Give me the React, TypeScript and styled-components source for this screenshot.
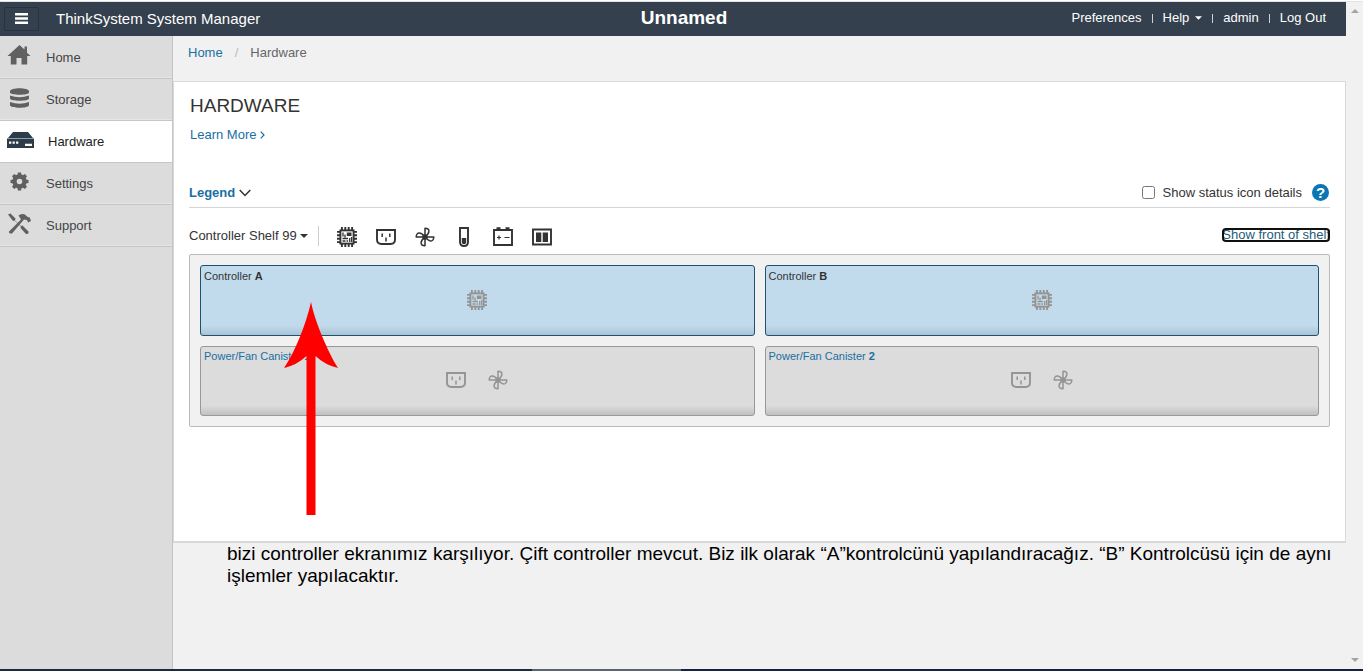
import React from "react";
import styled, { createGlobalStyle, css } from "styled-components";

const GlobalStyle = createGlobalStyle`
  * { box-sizing: border-box; }
  body {
    margin: 0;
    background: #f1f1f1;
    color: #333;
    font-family: "Liberation Sans", Arial, sans-serif;
    font-size: 13px;
    line-height: 18px;
  }
  a { color: #1a6fa3; text-decoration: none; }
  button, select, input { font: inherit; }
`;

const Window = styled.div`
  display: flex;
  flex-direction: column;
  min-height: 100vh;
  border-top: 1px solid #fff;
`;

const Viewport = styled.div`
  display: flex;
  flex: 1;
  border-top: 1px solid #dfe3e6;
`;

const Page = styled.div`
  display: flex;
  flex-direction: column;
  flex: 1;
  min-width: 0;
`;

const ScrollTrack = styled.div`
  display: flex;
  flex-direction: column;
  justify-content: space-between;
  align-items: center;
  width: 17px;
  padding: 7px 0 7px;
  background: #f1f1f1;
`;

const BottomEdge = styled.div`
  height: 2px;
  background: linear-gradient(90deg, #1b2b3c 39%, #5c6470 39%, #5c6470 50%, #16213f 50%);
`;

const Header = styled.header`
  display: grid;
  grid-template-columns: 1fr auto 1fr;
  align-items: center;
  height: 34px;
  padding-left: 4px;
  background: #34404d;
  color: #fff;
`;

const Brand = styled.div`
  display: flex;
  align-items: center;
  gap: 17px;
  font-size: 15px;
`;

const MenuButton = styled.button`
  display: flex;
  align-items: center;
  justify-content: center;
  width: 35px;
  height: 24px;
  padding: 0 0 2px;
  border: 1px solid #28323d;
  border-radius: 2px;
  background: transparent;
  color: #fff;
`;

const SystemName = styled.div`
  padding: 0 0 2px 18px;
  font-size: 19px;
  font-weight: bold;
`;

const UserNav = styled.nav`
  display: flex;
  align-items: center;
  justify-content: flex-end;
  gap: 10px;
  padding: 0 20px 2px 0;
  a { color: #fff; display: flex; align-items: center; gap: 6px; }
`;

const Bar = styled.span`
  width: 1px;
  height: 9px;
  background: #cdd2d6;
`;

const Body = styled.div`
  display: flex;
  flex: 1;
`;

const Sidebar = styled.nav`
  flex: 0 0 173px;
  padding-top: 1px;
  border-right: 1px solid #c4c4c4;
  background: #dcdcdc;
`;

const NavItem = styled.a<{ $active?: boolean }>`
  display: flex;
  align-items: center;
  gap: 14px;
  height: 42px;
  padding: 0 0 0 7px;
  border-bottom: 1px solid #c6c6c6;
  color: #444;
  box-shadow: inset 0 -1px #e6e6e6;
  ${(p) =>
    p.$active &&
    css`
      background: #fff;
      color: #222;
      box-shadow: none;
    `}
`;

const NavIcon = styled.svg`
  flex: none;
  margin-bottom: 4px;
`;

const Main = styled.main`
  flex: 1;
  min-width: 0;
`;

const Crumbs = styled.nav`
  display: flex;
  gap: 12px;
  height: 45px;
  padding: 8px 15px;
  color: #666;
`;

const Slash = styled.span`
  color: #bbb;
`;

const Panel = styled.section`
  position: relative;
  min-height: 462px;
  padding: 12px 15px 0;
  border: 1px solid #d9d9d9;
  border-bottom-width: 2px;
  background: #fff;
`;

const Intro = styled.div`
  padding-left: 1px;
`;

const Title = styled.h1`
  margin: 0;
  font-size: 19px;
  font-weight: normal;
  line-height: 24px;
`;

const LearnMore = styled.a`
  display: flex;
  align-items: center;
  gap: 4px;
  margin-top: 8px;
`;

const SplitRow = styled.div`
  display: flex;
  align-items: center;
  justify-content: space-between;
`;

const LegendRow = styled(SplitRow)`
  height: 30px;
  margin-top: 34px;
  border-bottom: 1px solid #d3d6d8;
`;

const LegendToggle = styled.button`
  display: flex;
  align-items: center;
  gap: 4px;
  padding: 0;
  border: 0;
  background: none;
  color: #1a6fa3;
  font-weight: bold;
`;

const StatusOptions = styled.div`
  display: flex;
  align-items: center;
  gap: 10px;
  padding-right: 1px;
`;

const CheckLabel = styled.label`
  display: flex;
  align-items: center;
  gap: 8px;
  input { width: 13px; height: 13px; margin: 0; }
`;

const HelpButton = styled.button`
  width: 17px;
  height: 17px;
  padding: 0;
  border: 0;
  border-radius: 50%;
  background: #0b76b4;
  color: #fff;
  font-weight: bold;
  font-size: 15px;
  line-height: 17px;
`;

const ToolRow = styled(SplitRow)`
  height: 46px;
  padding-top: 10px;
`;

const Tools = styled.div`
  display: flex;
  align-items: center;
`;

const ShelfPicker = styled.label`
  display: flex;
  align-items: center;
  gap: 3px;
  height: 20px;
  padding-right: 10px;
  border-right: 1px solid #ccc;
  select {
    appearance: none;
    padding: 0;
    border: 0;
    background: none;
    color: #333;
  }
`;

const FilterIcons = styled.div`
  display: flex;
  gap: 19px;
  padding: 2px 0 0 18px;
`;

const IconButton = styled.button`
  display: block;
  width: 20px;
  height: 20px;
  padding: 0;
  border: 0;
  background: none;
  color: #333;
`;

const FlipLink = styled.a`
  height: 14px;
  margin-bottom: 2px;
  overflow: hidden;
  border-radius: 4px;
  outline: 2px solid #101010;
  outline-offset: -2px;
  color: #235c78;
  line-height: 14px;
  text-decoration: underline;
`;

const Shelf = styled.div`
  display: grid;
  grid-template-columns: 1fr 1fr;
  gap: 10px;
  padding: 10px;
  border: 1px solid #bbb;
  border-radius: 2px;
  background: #f1f1f1;
`;

const Tile = styled.button<{ $kind: "controller" | "canister" }>`
  display: flex;
  flex-direction: column;
  justify-content: flex-start;
  align-items: stretch;
  gap: 5px;
  height: 71px;
  padding: 1px 3px;
  border: 1px solid;
  border-radius: 3px;
  font-size: 11px;
  text-align: left;
  ${(p) =>
    p.$kind === "controller"
      ? css`
          border-color: #1c516f;
          background: linear-gradient(#c2dbec 86%, #a9c3d5);
          color: #333;
        `
      : css`
          height: 70px;
          padding-top: 0;
          border-color: #999;
          background: linear-gradient(#dcdcdc 86%, #c0c0c0);
          color: #1a6fa3;
        `}
`;

const TileIcons = styled.span`
  display: flex;
  justify-content: center;
  gap: 22px;
  color: #949494;
`;

const Note = styled.p`
  margin: 0;
  padding: 0 10px 0 54px;
  color: #000;
  font-size: 19px;
  line-height: 22px;
`;

const Pointer = styled.svg`
  position: absolute;
  left: 110px;
  top: 220px;
`;

type Kind = "chip" | "outlet" | "fan" | "thermo" | "battery" | "module";

const glyphs: Record<Kind, React.ReactNode> = {
  chip: (
    <g stroke="currentColor" fill="none">
      <path
        strokeWidth="1.9"
        d="M4.9 0v4M8.3 0v4M11.7 0v4M15.1 0v4M4.9 16v4M8.3 16v4M11.7 16v4M15.1 16v4M0 4.9h4M0 8.3h4M0 11.7h4M0 15.1h4M16 4.9h4M16 8.3h4M16 11.7h4M16 15.1h4"
      />
      <rect x="3.4" y="3.4" width="13.2" height="13.2" strokeWidth="1.9" />
      <path strokeWidth="1.3" d="M6 5.500v4M8 7.500v3M5.500 11.500h5.500M5.500 14h3M9.500 14h1.600M12.700 11v4M14.600 10v5" />
      <path fill="currentColor" stroke="none" d="M9.800 5.500h4.700v3.500H9.800z" />
    </g>
  ),
  outlet: (
    <g stroke="currentColor" fill="none">
      <path strokeWidth="1.9" d="M1 3h18v9.500q0 4.500-4.500 4.500h-9Q1 17 1 12.500z" />
      <path strokeWidth="1.500" d="M6.200 6.500v3.500M13.800 6.500v3.500M10 10.500v4" />
    </g>
  ),
  fan: (
    <g stroke="currentColor" fill="none" strokeWidth="1.500" strokeLinejoin="round">
      {[0, 90, 180, 270].map((a) => (
        <path key={a} transform={`rotate(${a} 10 10)`} d="M10 9.500V1.200Q14.300 1.400 13.900 4.600Q13.500 7.500 10 9.500" />
      ))}
      <circle cx="10" cy="10" r="2" fill="currentColor" />
    </g>
  ),
  thermo: (
    <g>
      <path stroke="currentColor" strokeWidth="1.900" fill="none" d="M6 1h8v14q0 4-4 4t-4-4z" />
      <path fill="currentColor" d="M7.800 11h4.400v4.500q0 1.700-2.200 1.700t-2.200-1.700z" />
    </g>
  ),
  battery: (
    <g stroke="currentColor" fill="none">
      <path strokeWidth="1.900" d="M1 3h18v15H1z" />
      <path strokeWidth="2.600" d="M3.500 1.500h4M12.500 1.500h4" />
      <path strokeWidth="1.200" d="M4 10.500h4M6 8.500v4M11.500 10.500h5" />
    </g>
  ),
  module: (
    <g>
      <path stroke="currentColor" strokeWidth="1.900" fill="none" d="M1 2.500h18v15H1z" />
      <path fill="currentColor" d="M4 5.500h5.300v9.500H4zM10.700 5.500H16v9.500h-5.300z" />
    </g>
  ),
};

const Icon = ({ kind }: { kind: Kind }) => (
  <svg width="20" height="20" viewBox="0 0 20 20" aria-hidden="true">
    {glyphs[kind]}
  </svg>
);

const Caret = ({ w = 8, h = 4 }: { w?: number; h?: number }) => (
  <svg width={w} height={h} viewBox="0 0 8 4" aria-hidden="true">
    <path d="M0 0h8L4 4z" fill="currentColor" />
  </svg>
);

const navItems = [
  {
    label: "Home",
    icon: <path d="M12.500 0 0.500 11h3.300v8.500h5.700v-6.500h5v6.500h5.700V11h3.300l-3.500-3.300V1.500h-2.500v3z" />,
  },
  {
    label: "Storage",
    icon: (
      <path d="M3 4.200C3 .300 22 .300 22 4.200v1.300C22 8.500 3 8.500 3 5.500zM3 8.500q9.500 3.500 19 0v3c0 3-19 3-19 0zM3 15q9.500 3.500 19 0v3c0 3.700-19 3.700-19 0z" />
    ),
  },
  { label: "Hardware", active: true, icon: null },
  {
    label: "Settings",
    icon: (
      <g>
        <circle cx="12.500" cy="10.500" r="5" fill="none" stroke="currentColor" strokeWidth="4.400" />
        {[0, 45, 90, 135, 180, 225, 270, 315].map((a) => (
          <path key={a} transform={`rotate(${a} 12.5 10.5)`} d="M10.400 4.500l.500-3h3.200l.500 3z" />
        ))}
      </g>
    ),
  },
  {
    label: "Support",
    icon: (
      <g>
        <path d="M1 1.500 3.500.500l5 5-.500 2L14 13l1.500-.500 6 6q.500 1.500-.700 2.300-1.300.700-2.300-.300l-5-5.500.500-1.300-6.500-6.200-1.500.500z" />
        <path d="m2 18.500 12-12-2.500-4Q17-.500 19.500 3l2 1.500 1-.500 1.500 4-3 1.500-1-2.500-3-.500L5 20.500Q1.500 21 2 18.500z" />
      </g>
    ),
  },
];

const tiles = [
  { name: "Controller", id: "A", kind: "controller" as const, icons: ["chip"] as Kind[] },
  { name: "Controller", id: "B", kind: "controller" as const, icons: ["chip"] as Kind[] },
  { name: "Power/Fan Canister", id: "1", kind: "canister" as const, icons: ["outlet", "fan"] as Kind[] },
  { name: "Power/Fan Canister", id: "2", kind: "canister" as const, icons: ["outlet", "fan"] as Kind[] },
];

export default function App() {
  return (
    <Window>
      <GlobalStyle />
      <Viewport>
        <Page>
          <Header>
            <Brand>
              <MenuButton aria-label="Menu">
                <svg width="13" height="11" viewBox="0 0 13 11" aria-hidden="true">
                  <path d="M0 0h13v2.600H0zM0 4.200h13v2.600H0zM0 8.400h13V11H0z" fill="currentColor" />
                </svg>
              </MenuButton>
              ThinkSystem System Manager
            </Brand>
            <SystemName>Unnamed</SystemName>
            <UserNav>
              <a href="#preferences">Preferences</a>
              <Bar />
              <a href="#help">
                Help <Caret w={7} />
              </a>
              <Bar />
              <a href="#admin">admin</a>
              <Bar />
              <a href="#logout">Log Out</a>
            </UserNav>
          </Header>
          <Body>
            <Sidebar>
              {navItems.map((n) => (
                <NavItem key={n.label} href={"#" + n.label.toLowerCase()} $active={n.active}>
                  {n.active ? (
                    <NavIcon width="27" height="16" viewBox="0 0 27 16" fill="#2c3c4a">
                      <path
                        fillRule="evenodd"
                        d="M6 0h15l5 6H1zM0 6.600h27V16H0zM2 9.500v2.200h2.300V9.500zM5.600 9.500v2.200h2.200V9.500zM9.100 9.500v2.200h2.200V9.500zM18 11.700v2.300h7v-2.300z"
                      />
                    </NavIcon>
                  ) : (
                    <NavIcon width="25" height="21" viewBox="0 0 25 21" fill="currentColor" color="#606060">
                      {n.icon}
                    </NavIcon>
                  )}
                  {n.label}
                </NavItem>
              ))}
            </Sidebar>
            <Main>
              <Crumbs aria-label="Breadcrumb">
                <a href="#home">Home</a>
                <Slash>/</Slash>
                <span>Hardware</span>
              </Crumbs>
              <Panel>
                <Intro>
                  <Title>HARDWARE</Title>
                  <LearnMore href="#learn">
                    Learn More
                    <svg width="5" height="8" viewBox="0 0 5 8" fill="none" stroke="currentColor" strokeWidth="1.200" aria-hidden="true">
                      <path d="M.700.700 4 4 .700 7.300" />
                    </svg>
                  </LearnMore>
                </Intro>
                <LegendRow>
                  <LegendToggle>
                    Legend
                    <svg width="12" height="8" viewBox="0 0 12 8" fill="none" stroke="#333" strokeWidth="1.500" aria-hidden="true">
                      <path d="M.700 1 6 6.500 11.300 1" />
                    </svg>
                  </LegendToggle>
                  <StatusOptions>
                    <CheckLabel>
                      <input type="checkbox" />
                      Show status icon details
                    </CheckLabel>
                    <HelpButton aria-label="Help">?</HelpButton>
                  </StatusOptions>
                </LegendRow>
                <ToolRow>
                  <Tools>
                    <ShelfPicker>
                      <select aria-label="Shelf" defaultValue="99">
                        <option value="99">Controller Shelf 99</option>
                      </select>
                      <Caret />
                    </ShelfPicker>
                    <FilterIcons>
                      {(["chip", "outlet", "fan", "thermo", "battery", "module"] as Kind[]).map((k) => (
                        <IconButton key={k} aria-label={k}>
                          <Icon kind={k} />
                        </IconButton>
                      ))}
                    </FilterIcons>
                  </Tools>
                  <FlipLink href="#front">Show front of shelf</FlipLink>
                </ToolRow>
                <Shelf>
                  {tiles.map((t) => (
                    <Tile key={t.name + t.id} $kind={t.kind}>
                      <span>
                        {t.name} <b>{t.id}</b>
                      </span>
                      <TileIcons>
                        {t.icons.map((k) => (
                          <Icon key={k} kind={k} />
                        ))}
                      </TileIcons>
                    </Tile>
                  ))}
                </Shelf>
                <Pointer width="54" height="213" viewBox="0 0 54 213" aria-hidden="true">
                  <path d="M27 0C31 20 44 50 54 66Q41 63 31.500 54V213h-9V54Q13 63 0 66C12 48 22 22 27 0z" fill="#fe0000" />
                </Pointer>
              </Panel>
              <Note>
                bizi controller ekranımız karşılıyor. Çift controller mevcut. Biz ilk olarak “A”kontrolcünü yapılandıracağız. “B”
                Kontrolcüsü için de aynı işlemler yapılacaktır.
              </Note>
            </Main>
          </Body>
        </Page>
        <ScrollTrack aria-hidden="true">
          <svg width="8" height="4" viewBox="0 0 8 4">
            <path d="M0 4h8L4 0z" fill="#a3a3a3" />
          </svg>
          <svg width="8" height="4" viewBox="0 0 8 4">
            <path d="M0 0h8L4 4z" fill="#a3a3a3" />
          </svg>
        </ScrollTrack>
      </Viewport>
      <BottomEdge />
    </Window>
  );
}
